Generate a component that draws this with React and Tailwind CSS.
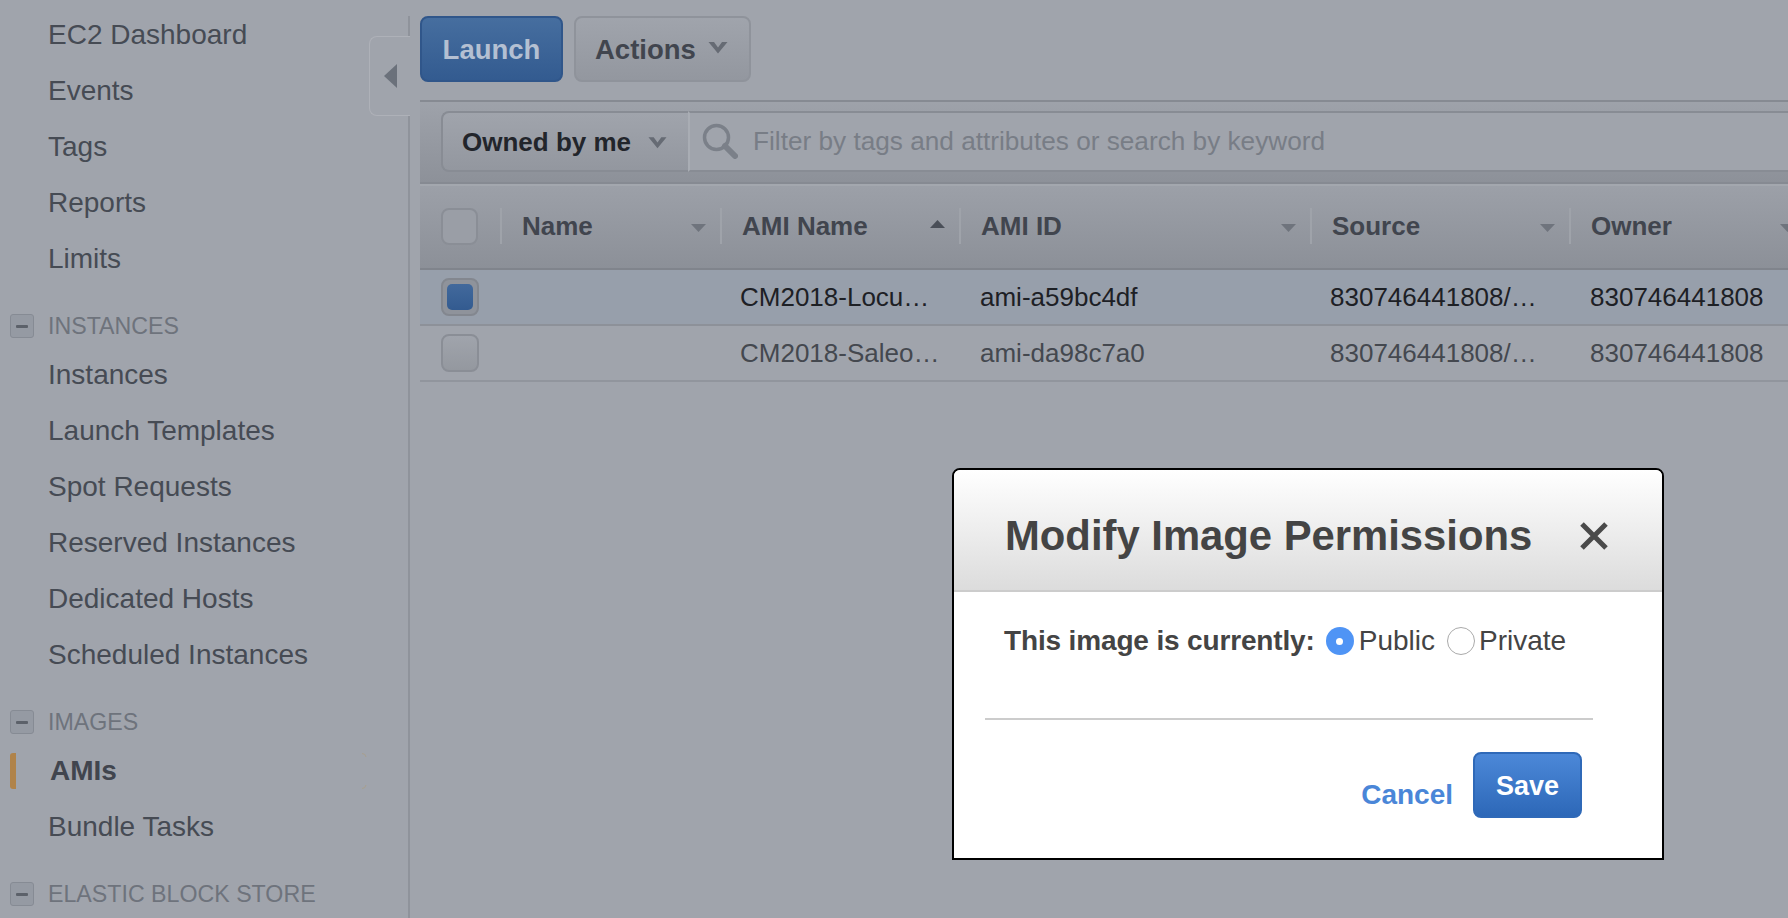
const sections = [
  { items: ['EC2 Dashboard', 'Events', 'Tags', 'Reports', 'Limits'] },
  { title: 'INSTANCES', items: ['Instances', 'Launch Templates', 'Spot Requests', 'Reserved Instances', 'Dedicated Hosts', 'Scheduled Instances'] },
  { title: 'IMAGES', items: ['AMIs', 'Bundle Tasks'] },
  { title: 'ELASTIC BLOCK STORE', items: [] },
];

const columns = [
  { name: 'Name', caret: 'down' },
  { name: 'AMI Name', caret: 'up' },
  { name: 'AMI ID', caret: 'down' },
  { name: 'Source', caret: 'down' },
  { name: 'Owner', caret: 'down' },
];

const rows = [
  { selected: true, ami: 'CM2018-Locu…', id: 'ami-a59bc4df', source: '830746441808/…', owner: '830746441808' },
  { selected: false, ami: 'CM2018-Saleo…', id: 'ami-da98c7a0', source: '830746441808/…', owner: '830746441808' },
];

const gridCols = 'grid grid-cols-[80px_220px_239px_351px_259px_240px]';

function Chevron({ className, size = 20 }) {
  return (
    <svg className={className} width={size} height="13" viewBox="0 0 20 13" fill="none">
      <path d="M0.5 1h5.5L10 6.5 14 1h5.5L10 12.5z" fill="#666b74" />
    </svg>
  );
}

function SortCaret({ dir }) {
  return (
    <svg width="15" height="8" viewBox="0 0 15 8" className={dir === 'up' ? 'mb-[4px]' : 'mt-[4px]'}>
      {dir === 'up' ? <path d="M7.5 0l7.5 8H0z" fill="#4a4f58" /> : <path d="M0 0h15L7.5 8z" fill="#6f747d" />}
    </svg>
  );
}

function GroupHeader({ title }) {
  return (
    <div className="mt-[20px] mb-[2px] flex h-[38px] items-center">
      <div className="ml-[10px] flex h-[24px] w-[24px] items-center justify-center rounded-[3px] border border-[#868b94] bg-[#959aa3]">
        <div className="h-[3px] w-[12px] rounded-[1px] bg-[#5c616a]" />
      </div>
      <span className="ml-[14px] text-[23.2px] text-[#6e737c]">{title}</span>
    </div>
  );
}

function SideItem({ label }) {
  const active = label === 'AMIs';
  return (
    <div className="relative flex h-[56px] items-center">
      <div className={`ml-[10px] h-[36px] w-[6px] rounded-l-[3px] ${active ? 'bg-[#b0834a]' : ''}`} />
      <span className={active ? 'ml-[34px] text-[28px] font-bold text-[#41454e]' : 'ml-[32px] text-[28px] text-[#464b54]'}>{label}</span>
      {active && (
        <svg className="absolute left-[362px] top-[10px]" width="5" height="36" viewBox="0 0 5 36" fill="none">
          <path d="M0 .5a4 4 0 0 1 4 3.5M0 35.5a4 4 0 0 0 4-3.5" stroke="#a89f8e" />
        </svg>
      )}
    </div>
  );
}

function Sidebar() {
  return (
    <aside className="relative h-full w-[410px] shrink-0 pt-[7px]">
      {sections.map((s, i) => (
        <div key={i}>
          {s.title && <GroupHeader title={s.title} />}
          {s.items.map((it) => <SideItem key={it} label={it} />)}
        </div>
      ))}
      {/* border with the collapse tab cut into it */}
      <div className="absolute right-0 top-[16px] h-[20px] w-[2px] bg-[#8f939b]" />
      <div className="absolute right-0 top-[115px] bottom-0 w-[2px] bg-[#8f939b]" />
      <div className="absolute right-0 top-[36px] flex h-[80px] w-[41px] items-center justify-center rounded-l-[8px] border border-r-0 border-[#aeb1b8]">
        <svg width="13" height="24" viewBox="0 0 13 24"><path d="M13 0v24L0 12z" fill="#6b717b" /></svg>
      </div>
    </aside>
  );
}

function Toolbar() {
  return (
    <div className="flex h-[100px] gap-[11px] pt-[16px]">
      <button className="h-[66px] w-[143px] rounded-[8px] border-2 border-[#30568a] bg-gradient-to-b from-[#466e9f] to-[#335b90] pt-[2px] text-[27.5px] font-bold text-[#b4c0d2]">Launch</button>
      <button className="flex h-[66px] w-[177px] items-center rounded-[8px] border-2 border-[#8f939b] bg-gradient-to-b from-[#a0a4ac] to-[#93979f] pl-[19px] pt-[2px] text-[27.5px] font-bold text-[#41454e]">
        Actions
        <Chevron className="ml-[12px] mb-[5px]" />
      </button>
    </div>
  );
}

function FilterBar() {
  return (
    <div className="flex h-[84px] items-center border-y-2 border-[#868a92] bg-gradient-to-b from-[#9ea2aa] to-[#8d9199] pb-[2px] pl-[21px]">
      <div className="flex h-[61px] w-[247px] shrink-0 items-center rounded-l-[8px] border-2 border-r-0 border-[#888c94] bg-gradient-to-b from-[#a0a4ac] to-[#93979f] pl-[19px] pt-[2px] text-[26px] font-bold text-[#22252b]">
        Owned by me
        <Chevron className="ml-[17px]" size={19} />
      </div>
      <div className="flex h-[61px] flex-1 items-center border-y-2 border-l-2 border-y-[#888c94] border-l-[#a9adb4] bg-[#a0a4ac] pl-[12px]">
        <svg width="36" height="36" viewBox="0 0 36 36" fill="none">
          <circle cx="14.5" cy="14.5" r="12" stroke="#7b8089" strokeWidth="3.5" />
          <path d="M23 23l10 10" stroke="#7b8089" strokeWidth="6" strokeLinecap="round" />
        </svg>
        <span className="ml-[15px] mt-[2px] text-[26.2px] text-[#787d86]">Filter by tags and attributes or search by keyword</span>
      </div>
    </div>
  );
}

function Table() {
  return (
    <div>
      <div className={`${gridCols} h-[86px] items-center border-t-2 border-b-2 border-t-[#a3a7ae] border-b-[#80848c] bg-gradient-to-b from-[#9ca0a8] to-[#8c9098] pb-[2px]`}>
        <div className="pl-[21px]">
          <div className="h-[37px] w-[37px] rounded-[8px] border-2 border-[#8a8e96] bg-[#9a9ea6]" />
        </div>
        {columns.map((c) => (
          <div key={c.name} className="flex h-[36px] items-center justify-between border-l-2 border-[#9fa3aa] pl-[20px] pr-[14px] text-[26px] font-bold text-[#41454e]">
            {c.name}
            <SortCaret dir={c.caret} />
          </div>
        ))}
      </div>
      {rows.map((r) => (
        <div key={r.id} className={`${gridCols} h-[56px] items-center border-b-2 text-[26px] ${r.selected ? 'border-[#8d9199] bg-[#979fab] text-[#1d2025]' : 'border-[#91959d] text-[#44484f]'}`}>
          <div className="pl-[21px]">
            {r.selected ? (
              <div className="flex h-[38px] w-[38px] items-center justify-center rounded-[8px] border-2 border-[#83878f] bg-[#8f939b]">
                <div className="h-[26px] w-[26px] rounded-[5px] bg-gradient-to-b from-[#42699c] to-[#335b90]" />
              </div>
            ) : (
              <div className="h-[38px] w-[38px] rounded-[8px] border-2 border-[#8a8e96] bg-gradient-to-b from-[#a0a4ac] to-[#94989f]" />
            )}
          </div>
          <div />
          <div className="pl-[20px] whitespace-nowrap">{r.ami}</div>
          <div className="pl-[21px] whitespace-nowrap">{r.id}</div>
          <div className="pl-[20px] whitespace-nowrap">{r.source}</div>
          <div className="pl-[21px] whitespace-nowrap">{r.owner}</div>
        </div>
      ))}
    </div>
  );
}

function Modal() {
  return (
    <div className="absolute left-[952px] top-[468px] h-[392px] w-[712px] rounded-t-[8px] border-2 border-black bg-white">
      <div className="flex h-[122px] items-center justify-between rounded-t-[6px] border-b-2 border-[#cccccc] bg-gradient-to-b from-white to-[#dcdcdc] pl-[51px] pr-[54px] pt-[12px]">
        <h2 className="text-[41.8px] font-bold text-[#444444]">Modify Image Permissions</h2>
        <svg width="28" height="28" viewBox="0 0 28 28" fill="none">
          <path d="M2 2l24 24M26 2L2 26" stroke="#4a4a4a" strokeWidth="5" />
        </svg>
      </div>
      <div className="px-[31px]">
        <div className="flex h-[126px] items-center pb-[28px] pl-[19px] text-[28px] text-[#444444]">
          <span className="font-bold tracking-[-0.15px]">This image is currently:</span>
          <span className="ml-[11px] flex h-[28px] w-[28px] items-center justify-center rounded-full bg-[#4f94f5]">
            <span className="h-[7px] w-[7px] rounded-full bg-white" />
          </span>
          <span className="ml-[5px]">Public</span>
          <span className="ml-[12px] h-[28px] w-[28px] rounded-full border border-[#aaaaaa] bg-white" />
          <span className="ml-[4px]">Private</span>
        </div>
        <div className="h-[2px] w-[608px] bg-[#cccccc]" />
        <div className="flex w-[608px] items-start justify-end pr-[11px] pt-[32px]">
          <span className="mt-[22px] text-[28px] font-bold text-[#4a86d8]">Cancel</span>
          <button className="ml-[20px] h-[66px] w-[109px] rounded-[8px] border-2 border-[#2f69b8] bg-gradient-to-b from-[#4c88d8] to-[#2d68b8] pt-[2px] text-[27px] font-bold text-white">Save</button>
        </div>
      </div>
    </div>
  );
}

export default function App() {
  return (
    <div className="relative flex h-[918px] w-[1788px] overflow-hidden bg-[#a0a4ac] font-['Liberation_Sans',Arial,sans-serif]">
      <Sidebar />
      <main className="ml-[10px] flex-1 min-w-0">
        <Toolbar />
        <FilterBar />
        <Table />
      </main>
      <Modal />
    </div>
  );
}
